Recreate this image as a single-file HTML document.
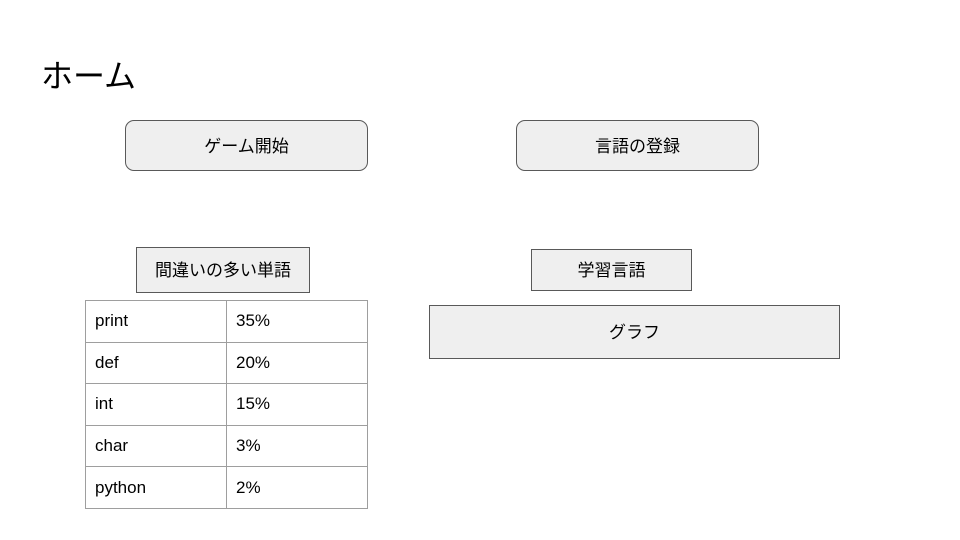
<!DOCTYPE html>
<html><head><meta charset="utf-8"><style>
body{margin:0;width:960px;height:540px;background:#fff;position:relative;overflow:hidden;font-family:"Liberation Sans","Noto Sans CJK JP",sans-serif;color:#000}
.a{position:absolute;box-sizing:border-box;display:flex;align-items:center;justify-content:center;background:#efefef;border:1px solid #595959;font-size:17px;padding-bottom:3px}
.r{border-radius:9px}
table{position:absolute;left:85px;top:300px;border-collapse:collapse;font-size:17px}
td{border:1px solid #9e9e9e;height:41.6px;padding:0 0 0 9px;box-sizing:border-box}
</style></head><body>
<div style="position:absolute;left:41px;top:51px;font-size:32px">ホーム</div>
<div class="a r" style="left:125px;top:120px;width:243px;height:51px">ゲーム開始</div>
<div class="a r" style="left:516px;top:120px;width:243px;height:51px">言語の登録</div>
<div class="a" style="left:136px;top:247px;width:174px;height:46px">間違いの多い単語</div>
<div class="a" style="left:531px;top:249px;width:161px;height:42px">学習言語</div>
<div class="a" style="left:429px;top:305px;width:411px;height:54px">グラフ</div>
<table>
<tr><td style="width:141px">print</td><td style="width:141px">35%</td></tr>
<tr><td>def</td><td>20%</td></tr>
<tr><td>int</td><td>15%</td></tr>
<tr><td>char</td><td>3%</td></tr>
<tr><td>python</td><td>2%</td></tr>
</table>
</body></html>
